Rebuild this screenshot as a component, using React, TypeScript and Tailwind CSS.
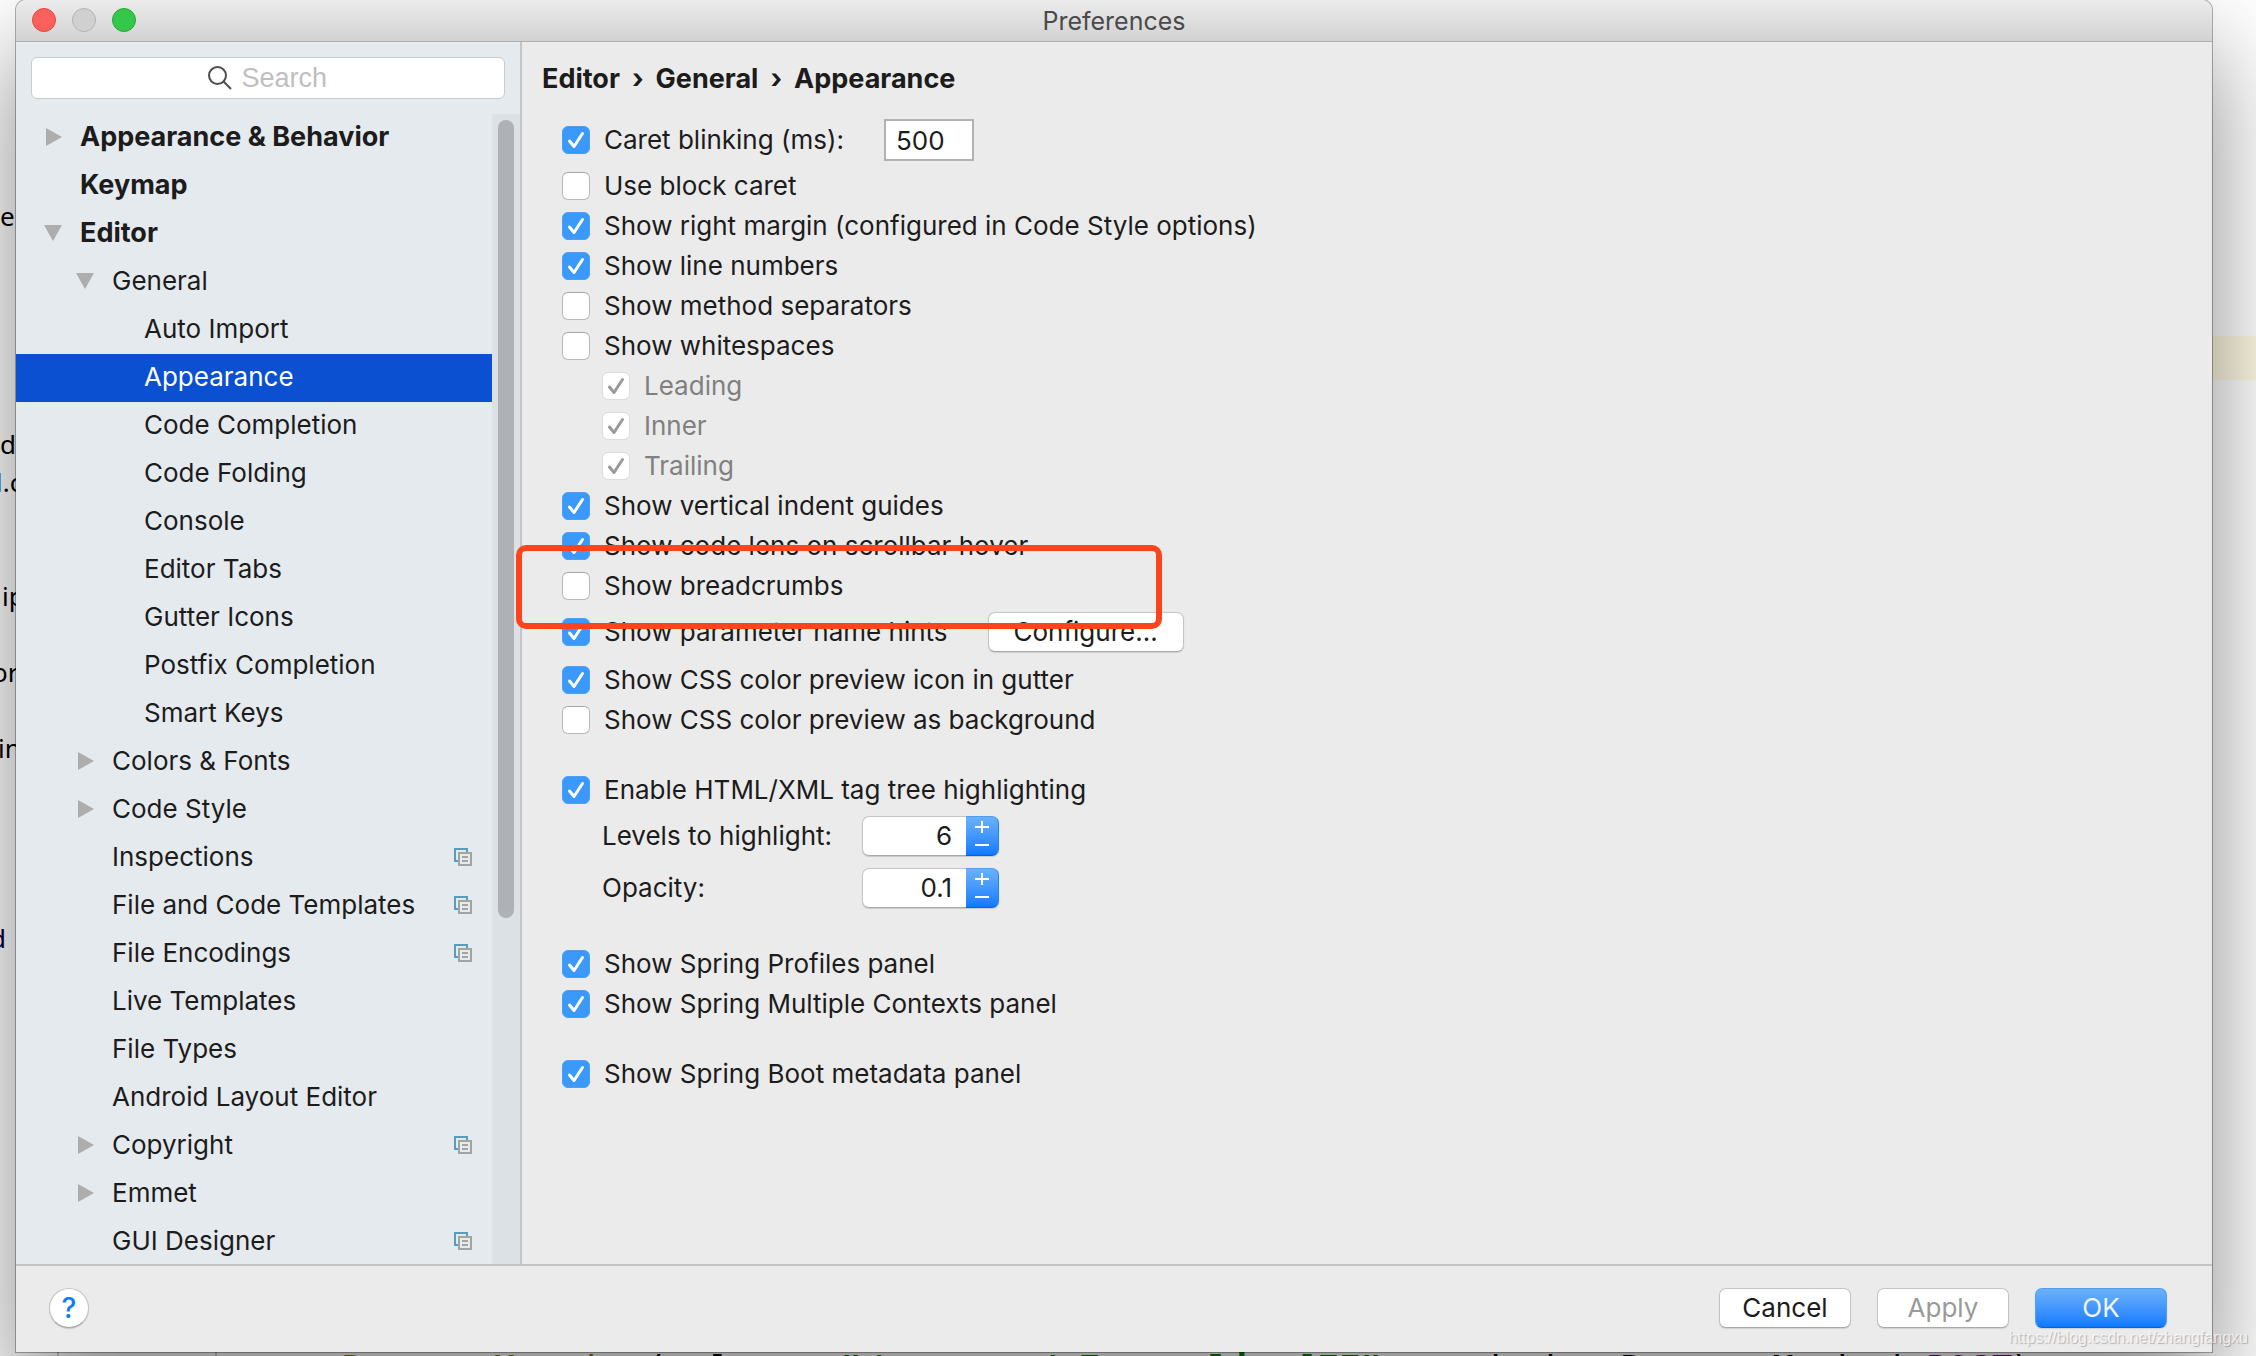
import { useState } from 'react'
import type { ReactNode } from 'react'

type TreeItem = {
  label: string
  level: 0 | 1 | 2
  arrow?: 'open' | 'closed'
  shared?: boolean
}

const tree: TreeItem[] = [
  { label: 'Appearance & Behavior', level: 0, arrow: 'closed' },
  { label: 'Keymap', level: 0 },
  { label: 'Editor', level: 0, arrow: 'open' },
  { label: 'General', level: 1, arrow: 'open' },
  { label: 'Auto Import', level: 2 },
  { label: 'Appearance', level: 2 },
  { label: 'Code Completion', level: 2 },
  { label: 'Code Folding', level: 2 },
  { label: 'Console', level: 2 },
  { label: 'Editor Tabs', level: 2 },
  { label: 'Gutter Icons', level: 2 },
  { label: 'Postfix Completion', level: 2 },
  { label: 'Smart Keys', level: 2 },
  { label: 'Colors & Fonts', level: 1, arrow: 'closed' },
  { label: 'Code Style', level: 1, arrow: 'closed' },
  { label: 'Inspections', level: 1, shared: true },
  { label: 'File and Code Templates', level: 1, shared: true },
  { label: 'File Encodings', level: 1, shared: true },
  { label: 'Live Templates', level: 1 },
  { label: 'File Types', level: 1 },
  { label: 'Android Layout Editor', level: 1 },
  { label: 'Copyright', level: 1, arrow: 'closed', shared: true },
  { label: 'Emmet', level: 1, arrow: 'closed' },
  { label: 'GUI Designer', level: 1, shared: true },
]

const indent = ['pl-7 font-bold text-[27px]', 'pl-15', 'pl-23']

function Arrow({ state }: { state?: 'open' | 'closed' }) {
  return (
    <svg viewBox="0 0 20 20" className="w-5 h-5 shrink-0" fill="#adadad">
      {state === 'closed' && <path d="M2 1 L18 10 L2 19 Z" />}
      {state === 'open' && <path d="M0 2 H18 L9 18 Z" />}
    </svg>
  )
}

function SharedIcon() {
  return (
    <svg viewBox="0 0 18 18" className="w-[18px] h-[18px] shrink-0" fill="none" strokeWidth="2">
      <path d="M4 13 H1 V1 H13 V4" stroke="#5a9bc0" />
      <path d="M5 5 H17 V17 H5 Z M8 9 H14 M8 13 H14" stroke="#a3a3a3" />
    </svg>
  )
}

function CheckRow({
  label,
  on = false,
  disabled = false,
  tall = false,
  children,
}: {
  label: string
  on?: boolean
  disabled?: boolean
  tall?: boolean
  children?: ReactNode
}) {
  const [checked, setChecked] = useState(on)
  return (
    <div className={`relative flex items-center ${tall ? 'h-[52px]' : 'h-10'} ${disabled ? 'pl-10 text-[#808080]' : ''}`}>
      <label className="flex items-center gap-[14px] whitespace-nowrap">
        <span className="relative block w-7 h-7 shrink-0">
          <input
            type="checkbox"
            checked={checked}
            disabled={disabled}
            onChange={(e) => setChecked(e.target.checked)}
            className="peer block appearance-none w-7 h-7 rounded-[6px] border border-[#b9b9b9] border-t-[#a5a5a5] bg-white enabled:checked:bg-[#3b99fc] enabled:checked:border-[#4c9ff8] disabled:border-[#dcdcdc]"
          />
          <svg
            viewBox="0 0 28 28"
            className={`absolute inset-0 w-7 h-7 pointer-events-none opacity-0 peer-checked:opacity-100 ${disabled ? 'text-[#9a9a9a]' : 'text-white'}`}
            fill="none"
            stroke="currentColor"
            strokeWidth="3"
            strokeLinecap="round"
            strokeLinejoin="round"
          >
            <path d="M7.500 15 L12 20.500 L20.500 7.500" />
          </svg>
        </span>
        <span>{label}</span>
      </label>
      {children}
    </div>
  )
}

function SpinnerRow({ id, label, value, step }: { id: string; label: string; value: string; step: number }) {
  const [current, setCurrent] = useState(value)
  const change = (by: number) => setCurrent(String(Math.round((Number(current) + by) * 10) / 10))
  return (
    <div className="flex items-center h-[52px] pl-10">
      <label htmlFor={id} className="w-[260px]">
        {label}
      </label>
      <div className="flex h-10 rounded-[7px] shadow-[0_1px_1px_rgba(0,0,0,0.15)]">
        <input
          id={id}
          value={current}
          onChange={(e) => setCurrent(e.target.value)}
          className="w-[104px] pr-[14px] text-right bg-white border border-r-0 border-[#c4c4c4] border-b-[#a9a9a9] rounded-l-[7px] outline-none"
        />
        <div className="flex flex-col w-[33px] overflow-hidden text-white rounded-r-[7px] border border-l-0 border-t-[#4f9ef2] border-r-[#2584f5] border-b-[#0461e6] bg-linear-to-b from-[#6bb1f9] to-[#0a7bff]">
          <button aria-label={`Increase ${label}`} className="flex-1 grid place-items-center" onClick={() => change(step)}>
            <svg viewBox="0 0 14 14" className="w-[14px] h-[14px]" stroke="currentColor" strokeWidth="2">
              <path d="M7 1 V13 M0 7 H14" />
            </svg>
          </button>
          <button aria-label={`Decrease ${label}`} className="flex-1 grid place-items-center" onClick={() => change(-step)}>
            <svg viewBox="0 0 14 14" className="w-[14px] h-[14px]" stroke="currentColor" strokeWidth="2">
              <path d="M0 6 H14" />
            </svg>
          </button>
        </div>
      </div>
    </div>
  )
}

// Editor window that lies behind the dialog
function EditorBackdrop() {
  return (
    <div aria-hidden="true" className="absolute inset-0 overflow-hidden bg-white text-[26px] leading-8 font-['Noto_Sans'] whitespace-pre text-black">
      <div className="absolute right-0 top-[336px] w-20 h-11 bg-[#fffae3]" />
      <span className="absolute left-0 top-[200px]">e</span>
      <span className="absolute left-0 top-[428px]">d</span>
      <span className="absolute -left-1 top-[466px]">
        <span className="text-[#3a7ab8]">l</span>.c
      </span>
      <span className="absolute left-0.5 top-[580px]">ip</span>
      <span className="absolute -left-2 top-[656px]">or</span>
      <span className="absolute -left-0.5 top-[732px]">in</span>
      <span className="absolute -left-2.5 top-[922px] text-[#000040]">d</span>
      <div className="absolute left-[57px] bottom-0 w-0.5 h-5 bg-[#d0d0d0]" />
      <div className="absolute left-[215px] bottom-0 w-0.5 h-5 bg-[#d0d0d0]" />
      <div className="absolute left-[320px] top-[1349px] text-[36px] leading-10 font-['DejaVu_Sans_Mono']">
        <span className="text-[#808000]">@RequestMapping</span>(value = <span className="font-bold text-[#008000]">"/summary/wExpertlist[FF"</span>, method = RequestMethod.
        <span className="font-bold italic text-[#660e7a]">POST</span>)
      </div>
    </div>
  )
}

export default function App() {
  const [selected, setSelected] = useState('Appearance')

  return (
    <div className="relative h-screen overflow-hidden pl-4 pr-11 pb-1 font-[Inter,sans-serif] text-[26px] leading-8 text-[#1c1c1c]">
      <EditorBackdrop />

      <div className="relative flex flex-col h-full rounded-t-[10px] bg-[#ebebeb] shadow-[0_0_0_1px_rgba(0,0,0,0.3),0_50px_100px_rgba(0,0,0,0.47)]">
        <header className="relative flex items-center justify-center h-[42px] shrink-0 rounded-t-[10px] border-b border-[#b0b0b0] bg-linear-to-b from-[#ececec] to-[#d2d2d2]">
          <div className="absolute left-4 top-2 flex gap-4">
            <button aria-label="Close" className="w-6 h-6 rounded-full border border-[#e2463f] bg-[#fc605c]" />
            <button aria-label="Minimize" disabled className="w-6 h-6 rounded-full border border-[#b3b3b3] bg-[#d0d0d0]" />
            <button aria-label="Zoom" className="w-6 h-6 rounded-full border border-[#25a735] bg-[#34c84a]" />
          </div>
          <h1 className="text-[25px] text-[#4a4a4a]">Preferences</h1>
        </header>

        <div className="flex flex-1 min-h-0">
          <aside className="flex flex-col w-[506px] shrink-0 border-r-2 border-[#c5c5c5] bg-[#e5eaee]">
            <div className="flex items-center h-[72px] shrink-0 px-[15px]">
              <label className="flex items-center justify-center gap-2.5 w-full h-[42px] rounded-[6px] border border-[#c9cbcd] bg-white">
                <svg viewBox="0 0 24 24" className="w-6 h-6" fill="none" stroke="#4d4d4d" strokeWidth="2">
                  <circle cx="9.500" cy="9.500" r="8.500" />
                  <path d="M15.500 15.500 L23 23" />
                </svg>
                <input
                  type="text"
                  aria-label="Search"
                  placeholder="Search"
                  className="w-[87px] font-['Liberation_Sans'] text-[27px] placeholder:text-[#bfbfbf] outline-none"
                />
              </label>
            </div>

            <div className="flex flex-1 min-h-0">
              <ul className="flex-1 overflow-hidden">
                {tree.map((item) => (
                  <li key={item.label}>
                    <button
                      onClick={() => setSelected(item.label)}
                      className={`flex items-center w-full h-12 pr-5 pb-0.5 text-left whitespace-nowrap ${indent[item.level]} ${
                        selected === item.label ? 'bg-[#0a50d1] text-white' : ''
                      }`}
                    >
                      <Arrow state={item.arrow} />
                      <span className="flex-1 pl-4">{item.label}</span>
                      {item.shared && <SharedIcon />}
                    </button>
                  </li>
                ))}
              </ul>
              <div className="w-7 px-1.5 pt-1.5 bg-[#dbe1e5]">
                <div className="w-4 h-[798px] max-h-full rounded-full bg-[#aeb2b7]" />
              </div>
            </div>
          </aside>

          <main className="flex-1 pl-10">
            <h2 className="flex items-center gap-3 h-[72px] pt-0.5 -ml-5 text-[27px] font-bold">
              <span>Editor</span>
              <span>›</span>
              <span>General</span>
              <span>›</span>
              <span>Appearance</span>
            </h2>

            <CheckRow label="Caret blinking (ms):" on tall>
              <input
                aria-label="Caret blinking (ms)"
                defaultValue="500"
                className="w-[90px] h-[42px] ml-10 pl-[10px] bg-white border-2 border-[#b1b1b1] outline-none"
              />
            </CheckRow>
            <CheckRow label="Use block caret" />
            <CheckRow label="Show right margin (configured in Code Style options)" on />
            <CheckRow label="Show line numbers" on />
            <CheckRow label="Show method separators" />
            <CheckRow label="Show whitespaces" />
            <CheckRow label="Leading" on disabled />
            <CheckRow label="Inner" on disabled />
            <CheckRow label="Trailing" on disabled />
            <CheckRow label="Show vertical indent guides" on />
            <CheckRow label="Show code lens on scrollbar hover" on />
            <CheckRow label="Show breadcrumbs">
              {/* red marker round the option */}
              <div className="absolute z-10 -left-[46px] -top-[21px] w-[646px] h-[84px] rounded-[10px] border-[6px] border-[#ff431a] pointer-events-none" />
            </CheckRow>
            <CheckRow label="Show parameter name hints" on tall>
              <button className="w-[196px] h-10 ml-10 rounded-[7px] border border-[#c4c4c4] border-b-[#a9a9a9] bg-white shadow-[0_1px_1px_rgba(0,0,0,0.12)]">
                Configure...
              </button>
            </CheckRow>

            <div className="pt-0.5 pb-[30px]">
              <CheckRow label="Show CSS color preview icon in gutter" on />
              <CheckRow label="Show CSS color preview as background" />
            </div>

            <div className="pb-[30px]">
              <CheckRow label="Enable HTML/XML tag tree highlighting" on />
              <SpinnerRow id="levels" label="Levels to highlight:" value="6" step={1} />
              <SpinnerRow id="opacity" label="Opacity:" value="0.1" step={0.1} />
            </div>

            <div className="pb-[30px]">
              <CheckRow label="Show Spring Profiles panel" on />
              <CheckRow label="Show Spring Multiple Contexts panel" on />
            </div>

            <CheckRow label="Show Spring Boot metadata panel" on />
          </main>
        </div>

        <footer className="flex items-center gap-[26px] h-[88px] shrink-0 pl-[33px] pr-[45px] pb-0.5 border-t-2 border-[#c4c4c4]">
          <button
            aria-label="Help"
            className="w-10 h-10 mr-auto rounded-full border border-[#c4c4c4] border-b-[#a9a9a9] bg-white text-[28px] font-medium text-[#0a7bff] shadow-[0_1px_1px_rgba(0,0,0,0.15)]"
          >
            ?
          </button>
          <button className="w-[132px] h-10 rounded-[7px] border border-[#c4c4c4] border-b-[#a9a9a9] bg-white shadow-[0_1px_1px_rgba(0,0,0,0.12)]">
            Cancel
          </button>
          <button
            disabled
            className="w-[132px] h-10 rounded-[7px] border border-[#c4c4c4] border-b-[#a9a9a9] bg-white text-[#9a9a9a] shadow-[0_1px_1px_rgba(0,0,0,0.12)]"
          >
            Apply
          </button>
          <button className="w-[132px] h-10 rounded-[7px] border border-[#4f9ef2] border-b-[#0461e6] bg-linear-to-b from-[#6bb1f9] to-[#0a7bff] text-[#f0f4fa] shadow-[0_1px_1px_rgba(0,0,0,0.12)]">
            OK
          </button>
        </footer>
      </div>

      <p className="absolute right-2 bottom-1.5 font-['Liberation_Sans'] text-base leading-6 text-white/70 [text-shadow:1px_1px_1px_rgba(0,0,0,0.25)]">
        https://blog.csdn.net/zhangfangxu
      </p>
    </div>
  )
}
